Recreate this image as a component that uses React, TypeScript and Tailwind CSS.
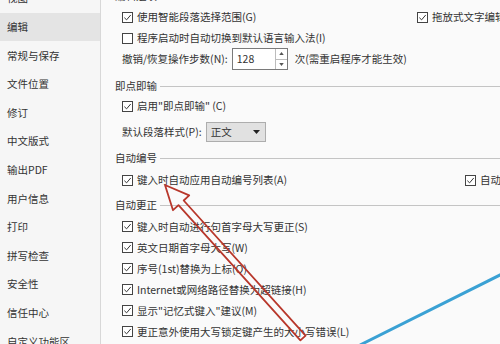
import React from 'react';

const navItems = [
  '视图',
  '编辑',
  '常规与保存',
  '文件位置',
  '修订',
  '中文版式',
  '输出PDF',
  '用户信息',
  '打印',
  '拼写检查',
  '安全性',
  '信任中心',
  '自定义功能区',
];

const Checkbox = ({ checked }: { checked: boolean }) => (
  <span className="flex h-[11px] w-[11px] shrink-0 items-center justify-center border border-[#444] bg-white">
    {checked && (
      <svg viewBox="0 0 10 10" className="h-[9px] w-[9px]">
        <path d="M1.5 5.2 L4 7.6 L8.6 2.2" fill="none" stroke="#333" strokeWidth="1.1" />
      </svg>
    )}
  </span>
);

const CheckRow = ({ checked, label, className = 'h-[21px]' }: { checked: boolean; label: string; className?: string }) => (
  <div className={`flex items-center gap-[4px] pl-[21px] ${className}`}>
    <Checkbox checked={checked} />
    <span className="whitespace-nowrap">{label}</span>
  </div>
);

const Section = ({ title, className }: { title: string; className: string }) => (
  <div className={`flex items-center gap-[3px] pl-[14px] ${className}`}>
    <span className="whitespace-nowrap">{title}</span>
    <div className="flex-1 border-t border-[#c4c4c4]" />
  </div>
);

export default function App() {
  return (
    <div
      className="relative flex h-[344px] w-[500px] overflow-hidden bg-[#fafafa] text-[10.5px] text-[#333]"
      style={{ fontFamily: '"Noto Sans CJK SC", "Noto Sans", sans-serif' }}
    >
      {/* Sidebar */}
      <div className="w-[101px] shrink-0 border-r border-[#d8d8d8] bg-[#f6f6f6]">
        <div className="-mt-[16px]">
          {navItems.map((item) => (
            <div
              key={item}
              className={`flex h-[28.6px] items-center pl-[7px] ${item === '编辑' ? 'bg-[#e4e4e4]' : ''}`}
            >
              {item}
            </div>
          ))}
        </div>
      </div>

      {/* Main */}
      <div className="flex-1 pr-0">
        <Section title="编辑选项" className="-mt-[14px] h-[20px]" />

        <div className="flex h-[22px] items-center pl-[21px]">
          <div className="flex w-[295px] items-center gap-[4px]">
            <Checkbox checked />
            <span className="whitespace-nowrap">使用智能段落选择范围(G)</span>
          </div>
          <div className="flex items-center gap-[4px]">
            <Checkbox checked />
            <span className="whitespace-nowrap">拖放式文字编辑(D)</span>
          </div>
        </div>

        <CheckRow checked={false} label="程序启动时自动切换到默认语言输入法(I)" className="h-[20px]" />

        <div className="flex h-[22px] items-center pl-[21px]">
          <span className="whitespace-nowrap">撤销/恢复操作步数(N):</span>
          <div className="ml-[4px] flex h-[22px] w-[56px] border border-[#7a7a7a] bg-white">
            <span className="flex flex-1 items-center pl-[4px]">128</span>
            <div className="flex w-[12px] flex-col border-l border-[#bcbcbc]">
              <div className="flex flex-1 items-center justify-center border-b border-[#bcbcbc]">
                <svg viewBox="0 0 6 4" className="h-[3px] w-[5px]"><path d="M0 4 L3 0 L6 4 Z" fill="#555" /></svg>
              </div>
              <div className="flex flex-1 items-center justify-center">
                <svg viewBox="0 0 6 4" className="h-[3px] w-[5px]"><path d="M0 0 L3 4 L6 0 Z" fill="#555" /></svg>
              </div>
            </div>
          </div>
          <span className="ml-[7px] whitespace-nowrap">次(需重启程序才能生效)</span>
        </div>

        <Section title="即点即输" className="mt-[6px] h-[20px]" />
        <CheckRow checked label={'启用"即点即输" (C)'} className="h-[20px]" />

        <div className="mt-[6px] flex h-[20px] items-center pl-[21px]">
          <span className="whitespace-nowrap">默认段落样式(P):</span>
          <div className="ml-[4px] flex h-[20px] w-[60px] items-center justify-between border border-[#adadad] bg-[#e1e1e1] pl-[4px] pr-[5px]">
            <span>正文</span>
            <svg viewBox="0 0 7 4" className="h-[4px] w-[7px]"><path d="M0 0 L3.5 4 L7 0 Z" fill="#222" /></svg>
          </div>
        </div>

        <Section title="自动编号" className="mt-[6px] h-[20px]" />
        <div className="mt-[2px] flex h-[20px] items-center pl-[21px]">
          <div className="flex w-[343px] items-center gap-[4px]">
            <Checkbox checked />
            <span className="whitespace-nowrap">键入时自动应用自动编号列表(A)</span>
          </div>
          <div className="flex items-center gap-[4px]">
            <Checkbox checked />
            <span className="whitespace-nowrap">自动编号</span>
          </div>
        </div>

        <Section title="自动更正" className="mt-[5px] h-[20px]" />
        <div className="mt-[1px]">
          <CheckRow checked label="键入时自动进行句首字母大写更正(S)" />
          <CheckRow checked label="英文日期首字母大写(W)" />
          <CheckRow checked label="序号(1st)替换为上标(O)" />
          <CheckRow checked label="Internet或网络路径替换为超链接(H)" />
          <CheckRow checked label={'显示"记忆式键入"建议(M)'} />
          <CheckRow checked label="更正意外使用大写锁定键产生的大小写错误(L)" />
          <CheckRow checked={false} label="段落开头空格采用缩进处理(B)" />
        </div>
      </div>

      {/* annotation overlay */}
      <svg className="pointer-events-none absolute left-0 top-0" width="500" height="344" viewBox="0 0 500 344">
        <polygon
          points="165,185 189.2,195.4 183.7,200.5 305.6,335.7 300.4,340.3 178.5,205.1 173,210.2"
          fill="none"
          stroke="#b8372b"
          strokeWidth="1.8"
          strokeLinejoin="round"
        />
        <line x1="360" y1="345" x2="502" y2="274" stroke="#3aa1d4" strokeWidth="3" />
      </svg>
    </div>
  );
}
